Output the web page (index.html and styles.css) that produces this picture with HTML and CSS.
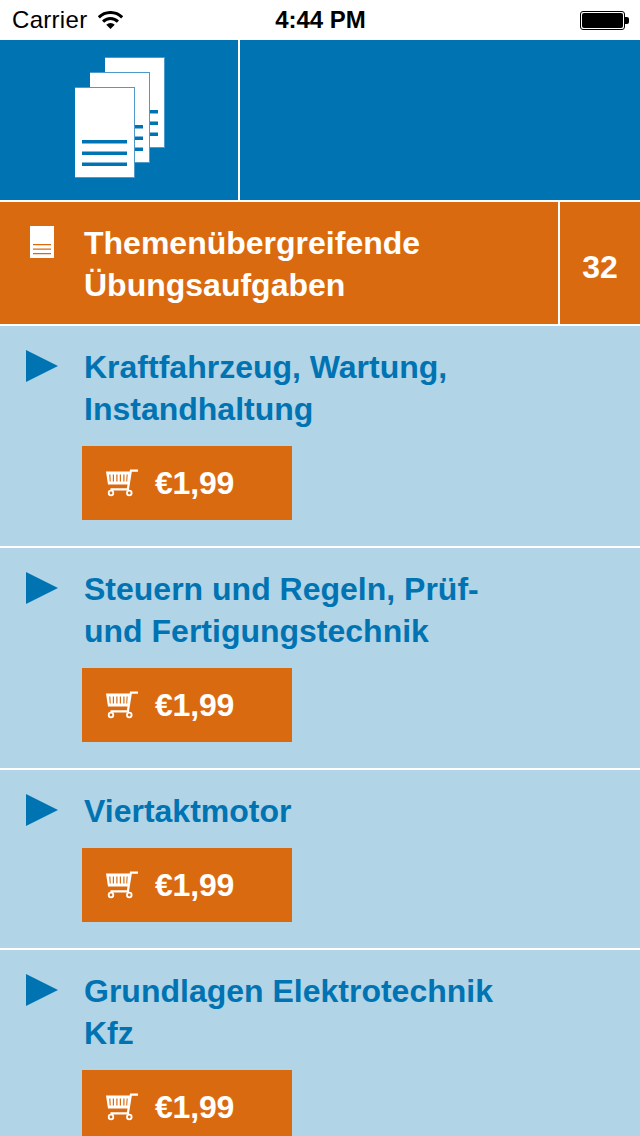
FILE: index.html
```html
<!DOCTYPE html>
<html>

<head>
    <meta charset="utf-8">
    <link rel="stylesheet" href="styles.css">
</head>

<body>
<svg class="defs" width="0" height="0">
    <symbol id="cart" viewBox="0 0 32 28">
        <path d="M0 2.500h24l-1.500 13h-20.500z" fill="#fff"/>
        <path d="M3.200 5.500h1.200l.4 7h-1.100z M6.800 5.500h1.200v7h-1.200z M10.300 5.500h1.200v7h-1.200z M13.800 5.500h1.200v7h-1.200z M17.300 5.500h1.200v7h-1.200z M20.600 5.500h1.100l-.5 7h-1z" fill="#da6a10"/>
        <path d="M24 .5h8v2.300h-6.200l-3 18.700h-18.300v-2.200h16.400z" fill="#fff"/>
        <circle cx="5" cy="24" r="2.300" fill="none" stroke="#fff" stroke-width="1.800"/>
        <circle cx="23.300" cy="24" r="2.300" fill="none" stroke="#fff" stroke-width="1.800"/>
    </symbol>
</svg>

<div class="status">
    <div class="status-left">
        <span class="carrier">Carrier</span>
        <svg class="wifi" width="25" height="19" viewBox="0 0 25 19">
            <path d="M.83 6.33A16.500 16.500 0 0 1 24.170 6.330" fill="none" stroke="#000" stroke-width="3"/>
            <path d="M5.080 10.580A10.500 10.500 0 0 1 19.920 10.580" fill="none" stroke="#000" stroke-width="3"/>
            <path d="M12.500 18L8.260 13.760A6 6 0 0 1 16.740 13.760z" fill="#000"/>
        </svg>
    </div>
    <div class="status-time">4:44 PM</div>
    <div class="status-right">
        <div class="battery"><div class="battery-fill"></div></div>
        <div class="battery-tip"></div>
    </div>
</div>

<div class="top">
    <div class="top-icon">
        <svg width="90" height="121" viewBox="0 0 90 121">
            <rect x="30" y="0" width="60" height="91" fill="#4c9bcb"/>
            <rect x="30" y="1" width="59" height="89" fill="#fff"/>
            <path d="M75 53h8v3.500h-8z M75 64.500h8v3.500h-8z M75 75.500h8v3.500h-8z" fill="#0073b2"/>
            <rect x="15" y="15" width="60" height="91" fill="#4c9bcb"/>
            <rect x="15" y="16" width="59" height="89" fill="#fff"/>
            <path d="M60 68h8v3.500h-8z M60 79.500h8v3.500h-8z M60 90.500h8v3.500h-8z" fill="#0073b2"/>
            <rect x="0" y="30" width="60" height="91" fill="#4c9bcb"/>
            <rect x="0" y="31" width="59" height="89" fill="#fff"/>
            <path d="M7 83h45v3.500h-45z M7 94.500h45v3.500h-45z M7 105.500h45v3.500h-45z" fill="#0073b2"/>
        </svg>
    </div>
    <div class="top-rest"></div>
</div>

<div class="topic">
    <div class="topic-main">
        <svg class="topic-doc" width="24" height="32" viewBox="0 0 24 32">
            <rect width="24" height="32" fill="#fff"/>
            <path d="M3 18h18v1.300h-18z M3 22.500h18v1.300h-18z M3 27h18v1.300h-18z" fill="#da6a10"/>
        </svg>
        <div class="topic-title">Themenübergreifende<br>Übungsaufgaben</div>
    </div>
    <div class="topic-count">32</div>
</div>

<div class="item">
    <div class="arrow"></div>
    <div class="item-body">
        <div class="item-title">Kraftfahrzeug, Wartung,<br>Instandhaltung</div>
        <div class="buy"><svg class="cart" width="32" height="28"><use href="#cart"/></svg><span>€1,99</span></div>
    </div>
</div>

<div class="item">
    <div class="arrow"></div>
    <div class="item-body">
        <div class="item-title">Steuern und Regeln, Prüf-<br>und Fertigungstechnik</div>
        <div class="buy"><svg class="cart" width="32" height="28"><use href="#cart"/></svg><span>€1,99</span></div>
    </div>
</div>

<div class="item">
    <div class="arrow"></div>
    <div class="item-body">
        <div class="item-title">Viertaktmotor</div>
        <div class="buy"><svg class="cart" width="32" height="28"><use href="#cart"/></svg><span>€1,99</span></div>
    </div>
</div>

<div class="item">
    <div class="arrow"></div>
    <div class="item-body">
        <div class="item-title">Grundlagen Elektrotechnik<br>Kfz</div>
        <div class="buy"><svg class="cart" width="32" height="28"><use href="#cart"/></svg><span>€1,99</span></div>
    </div>
</div>
</body>

</html>
```

FILE: styles.css
```css
html, body {
    margin: 0;
    height: 1136px;
    overflow: hidden;
}

body {
    width: 640px;
    background: #b1d4e7;
    font-family: "Liberation Sans", Arial, sans-serif;
}

.defs {
    display: block;
    height: 0;
}

.status {
    display: grid;
    grid-template-columns: 1fr auto 1fr;
    align-items: center;
    height: 40px;
    padding: 0 11px 0 12px;
    box-sizing: border-box;
    background: white;
    color: black;
    font-size: 24px;
}

.status-left {
    display: flex;
    align-items: center;
    gap: 11px;
}

.carrier {
    letter-spacing: .3px;
}

.status-time {
    font-weight: bold;
}

.status-right {
    display: flex;
    justify-content: flex-end;
    align-items: center;
}

.battery {
    width: 45px;
    height: 19px;
    box-sizing: border-box;
    padding: 1px;
    border: 1px solid black;
    border-radius: 3px;
}

.battery-fill {
    height: 100%;
    background: black;
    border-radius: 2px;
}

.battery-tip {
    width: 4px;
    height: 7px;
    background: black;
    border-radius: 0 2px 2px 0;
}

.top {
    display: flex;
    height: 160px;
    background: #0073b2;
}

.top-icon {
    display: flex;
    justify-content: center;
    align-items: flex-start;
    box-sizing: border-box;
    width: 240px;
    padding: 17px 0 0 2px;
    border-right: 2px solid white;
}

.topic {
    display: flex;
    height: 122px;
    border-top: 2px solid white;
    border-bottom: 2px solid white;
    background: #da6a10;
    color: white;
    font-size: 32px;
    font-weight: bold;
}

.topic-main {
    display: flex;
    box-sizing: border-box;
    width: 560px;
    padding: 20px 0 0 30px;
    border-right: 2px solid white;
}

.topic-doc {
    margin: 4px 30px 0 0;
}

.topic-title {
    line-height: 42px;
}

.topic-count {
    flex: 1;
    padding-top: 44px;
    line-height: 42px;
    text-align: center;
}

.item {
    display: flex;
    box-sizing: border-box;
    padding: 20px 0 26px 26px;
    border-bottom: 2px solid white;
}

.arrow {
    width: 0;
    height: 0;
    margin: 4px 26px 0 0;
    border-left: 32px solid #0073b2;
    border-top: 16px solid transparent;
    border-bottom: 16px solid transparent;
}

.item-title {
    color: #0073b2;
    font-size: 32px;
    font-weight: bold;
    line-height: 42px;
}

.buy {
    display: flex;
    align-items: center;
    width: 210px;
    height: 74px;
    margin: 16px 0 0 -2px;
    padding-left: 24px;
    box-sizing: border-box;
    background: #da6a10;
    color: white;
    font-size: 32px;
    font-weight: bold;
    letter-spacing: -.2px;
}

.cart {
    margin-right: 17px;
}
```
